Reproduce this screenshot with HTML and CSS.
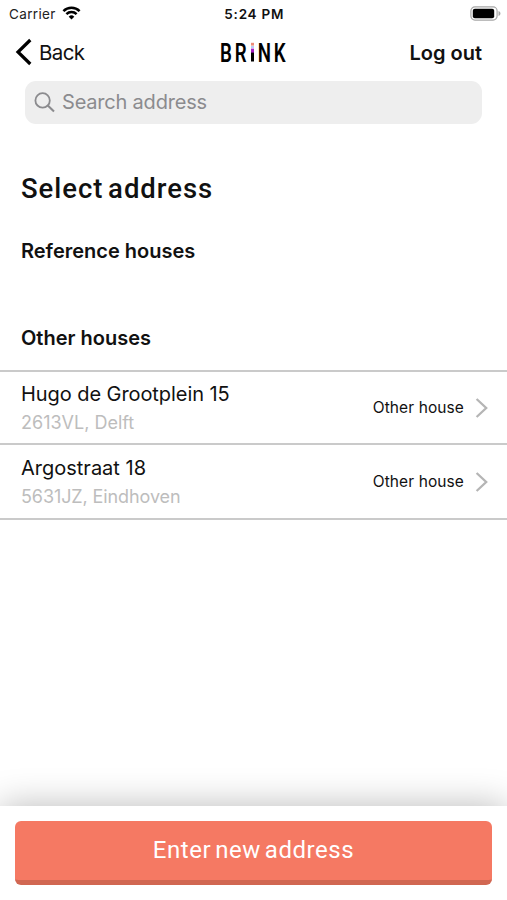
FILE: index.html
```html
<!DOCTYPE html>
<html lang="en">
<head>
<meta charset="utf-8">
<title>Select address</title>
<link rel="stylesheet" href="styles.css">
</head>
<body>
<div class="screen">
  <header>
    <div class="status">
      <div class="status-left">
        <span class="carrier">Carrier</span>
        <svg class="wifi" width="19" height="14" viewBox="0 0 18 14" fill="none" stroke="#000" stroke-width="2.5"><path d="M.9 5.1a11.5 11.5 0 0 1 16.2 0M3.9 8.2a7.2 7.2 0 0 1 10.2 0"/><path d="M9 13.5 6.2 10.7a4 4 0 0 1 5.6 0Z" fill="#000" stroke="none"/></svg>
      </div>
      <span class="time">5:24 PM</span>
      <svg class="battery" width="31" height="15" viewBox="0 0 31 15"><rect x=".9" y=".9" width="26.2" height="13.2" rx="4" fill="none" stroke="#a6a6a6" stroke-width="1.2"/><rect x="2.8" y="2.8" width="21.4" height="9.4" rx="2" fill="#000"/><path d="M28.5 5c2.6 1 2.6 4 0 5Z" fill="#a6a6a6"/></svg>
    </div>
    <nav class="nav">
      <div class="back">
        <svg width="17" height="28" viewBox="0 0 17 28" fill="none" stroke="#000" stroke-width="3.2"><path d="M15.3 2 3 14l12.3 12"/></svg>
        <span class="back-label">Back</span>
      </div>
      <svg class="logo" width="75" height="44" viewBox="-4 -10 75 44" role="img" aria-label="BRiNK">
        <g transform="scale(.72 1)"><text x="0" y="21.5">B</text><text x="20.5" y="21.5">R</text><text x="52.5" y="21.5">N</text><text x="74.5" y="21.5">K</text></g>
        <path d="M31 11h3v10.5h-3z" fill="#000"/><path d="M31 8.6h3v4h-3z" fill="#a51fc4"/><path d="M31 6h3v2h-3z" fill="#b9cdf5"/><path d="M31 2.8h3v2.8h-3z" fill="#ed8b78"/>
      </svg>
      <span class="logout">Log out</span>
    </nav>
    <div class="search">
      <svg width="21" height="21" viewBox="0 0 21 21" fill="none" stroke="#8b8b8e" stroke-width="1.8"><circle cx="8.6" cy="8.4" r="7.2"/><path d="m13.8 13.6 6.2 6" stroke-width="2.1"/></svg>
      <span class="search-label">Search address</span>
    </div>
  </header>
  <main>
    <h1>Select address</h1>
    <h2 class="reference">Reference houses</h2>
    <h2 class="other">Other houses</h2>
    <ul class="list">
      <li class="row">
        <div class="place"><span class="street street-long">Hugo de Grootplein 15</span><span class="city">2613VL, Delft</span></div>
        <span class="kind">Other house</span>
        <svg class="chevron" width="14" height="22" viewBox="0 0 14 22" fill="none" stroke="#b5b5b5" stroke-width="2.3"><path d="m1.6 2 9.6 9-9.6 9"/></svg>
      </li>
      <li class="row row-last">
        <div class="place"><span class="street">Argostraat 18</span><span class="city city-long">5631JZ, Eindhoven</span></div>
        <span class="kind">Other house</span>
        <svg class="chevron" width="14" height="22" viewBox="0 0 14 22" fill="none" stroke="#b5b5b5" stroke-width="2.3"><path d="m1.6 2 9.6 9-9.6 9"/></svg>
      </li>
    </ul>
  </main>
  <footer>
    <button>Enter new address</button>
  </footer>
</div>
</body>
</html>
```
FILE: styles.css
```css
* { box-sizing: border-box; }
body { margin: 0; background: #fff; color: #111; font-family: Inter, "Liberation Sans", sans-serif; }
.screen { width: 507px; height: 900px; display: flex; flex-direction: column; overflow: hidden; white-space: nowrap; }
svg { display: block; flex: none; }
header { flex: none; }
.status { display: grid; grid-template-columns: 1fr auto 1fr; align-items: center; height: 28px; padding: 0 6px 0 9px; }
.status-left { display: flex; align-items: center; gap: 6px; }
.carrier { font-size: 13.5px; color: #222; letter-spacing: .35px; }
.wifi { margin-top: -2px; }
.time { font-size: 13.5px; font-weight: 600; letter-spacing: .75px; margin-right: 1.5px; }
.battery { justify-self: end; margin-top: -2px; }
.nav { display: grid; grid-template-columns: 1fr auto 1fr; align-items: center; height: 48px; padding: 0 25px 0 15px; }
.back { display: flex; align-items: center; gap: 7px; font-size: 20.5px; }
.back-label { letter-spacing: -.6px; }
.logo { margin-left: 10px; font: 600 26px Roboto, sans-serif; }
.logout { justify-self: end; font-size: 20px; font-weight: 600; padding-top: 1px; }
.search { display: flex; align-items: center; gap: 7px; height: 43px; margin: 5px 25px 0; padding-left: 9px; border-radius: 11px; background: #eee; color: #8b8b8e; font-size: 20px; }
.search-label { letter-spacing: -.2px; margin-top: -2px; }
main { flex: 1; }
h1, h2, ul { margin: 0; padding: 0; }
h1 { margin: 45px 0 0 21px; font: 500 27.5px/40px Roboto, sans-serif; letter-spacing: .95px; word-spacing: -3px; }
h2 { margin-left: 21px; font-size: 20px; font-weight: 600; line-height: 30px; }
.reference { margin-top: 27px; }
.other { margin-top: 57px; }
.list { list-style: none; margin-top: 17px; border-top: 2px solid #cacaca; }
.row { display: flex; align-items: center; height: 73px; padding: 0 18px 0 21px; border-bottom: 2px solid #cacaca; }
.row-last { height: 75px; }
.place { display: flex; flex-direction: column; flex: 1; padding-top: 2px; }
.street { font-size: 20px; line-height: 29px; }
.street-long { letter-spacing: -.07px; }
.city { font-size: 18px; line-height: 28px; color: #bdbdbd; }
.city-long { letter-spacing: -.1px; }
.kind { font-size: 15.5px; letter-spacing: .1px; }
.chevron { margin-left: 11px; }
footer { flex: none; height: 94px; padding: 15px 15px 0; background: #fff; box-shadow: 0 0 36px rgba(0,0,0,.28); }
button { display: block; width: 477px; height: 64px; padding: 0 0 1px; border: 0; border-bottom: 5px solid #d16752; border-radius: 6px; background: #f57963; color: #fff; font: 400 24px Roboto, sans-serif; letter-spacing: .55px; word-spacing: -2.5px; }
```
